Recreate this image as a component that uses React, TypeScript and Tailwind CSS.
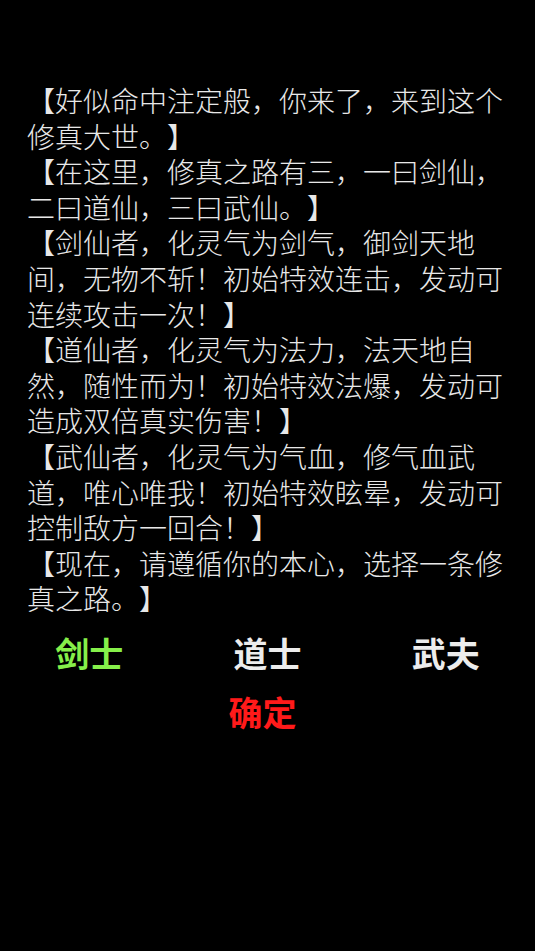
import { useState } from "react";

const paragraphs = [
  "【好似命中注定般，你来了，来到这个修真大世。】",
  "【在这里，修真之路有三，一曰剑仙，二曰道仙，三曰武仙。】",
  "【剑仙者，化灵气为剑气，御剑天地间，无物不斩！初始特效连击，发动可连续攻击一次！】",
  "【道仙者，化灵气为法力，法天地自然，随性而为！初始特效法爆，发动可造成双倍真实伤害！】",
  "【武仙者，化灵气为气血，修气血武道，唯心唯我！初始特效眩晕，发动可控制敌方一回合！】",
  "【现在，请遵循你的本心，选择一条修真之路。】",
];

const roles = ["剑士", "道士", "武夫"];

export default function App() {
  const [selected, setSelected] = useState(0);

  return (
    <main
      className="min-h-[951px] w-full bg-black text-[#e8e8e8] [text-spacing-trim:space-all]"
      style={{ fontFamily: '"Noto Sans CJK SC", "Noto Sans", sans-serif' }}
    >
      <div className="px-[27px] pt-[83px] text-[28px] font-light leading-[35.6px]">
        {paragraphs.map((p, i) => (
          <p key={i}>{p}</p>
        ))}
      </div>

      <div className="mt-[14px] grid grid-cols-3 text-[34px] font-bold leading-[44px]">
        {roles.map((role, i) => (
          <button
            key={role}
            onClick={() => setSelected(i)}
            className={
              "text-center " +
              (selected === i ? "text-[#86f04a]" : "text-[#ececec]")
            }
          >
            {role}
          </button>
        ))}
      </div>

      <div className="mt-[15px] flex justify-center pr-[10px]">
        <button className="text-[34px] font-bold leading-[44px] text-[#ff1a1a]">
          确定
        </button>
      </div>
    </main>
  );
}
